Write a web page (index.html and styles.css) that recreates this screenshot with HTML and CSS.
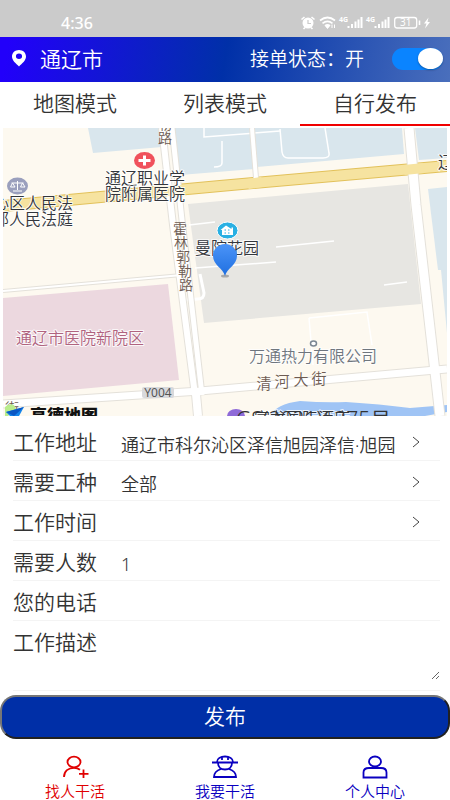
FILE: index.html
```html
<!DOCTYPE html>
<html lang="zh-CN">
<head>
    <meta charset="UTF-8">
    <meta name="viewport" content="width=device-width, initial-scale=1.0">
    <link rel="stylesheet" href="styles.css">
    <title>自行发布</title>
</head>
<body>
    <!-- status bar -->
    <div class="status">
        <span class="time">4:36</span>
        <svg class="status-icons" width="132" height="16" viewBox="300 15 132 16">
            <circle cx="308" cy="23" r="5.5" fill="#fff"/>
            <path d="M301.5 19.500 L304.500 17 M311.500 17 L314.500 19.500 M303.500 29 L305 27.500 M312.500 29 L311 27.500" stroke="#fff" stroke-width="1.600"/>
            <path d="M308 20 V23.500 H311" fill="none" stroke="#cbcbcb" stroke-width="1.200"/>
            <path d="M320 20.500 Q327.500 14.500 335 20.500 M322.500 23.300 Q327.500 19.300 332.500 23.300 M325 26 Q327.500 24 330 26" fill="none" stroke="#fff" stroke-width="1.700"/>
            <path d="M326 26.500 H329 L327.500 28.500 Z M332 24.500 V28 M334.500 24.500 V28" fill="#fff" stroke="#fff"/>
            <text x="339" y="22" class="net">4G</text>
            <path d="M348.500 28 V26 M352 28 V24 M355.500 28 V21.500 M358.500 28 V19.500 M361.500 28 V17" stroke="#fff" stroke-width="2"/>
            <text x="366" y="22" class="net">4G</text>
            <path d="M375.500 28 V26 M379 28 V24 M382.500 28 V21.500 M385.500 28 V19.500 M388.500 28 V17" stroke="#fff" stroke-width="2"/>
            <rect x="394.700" y="17.500" width="22" height="10.500" rx="2.500" fill="none" stroke="#fff" stroke-width="1.300"/>
            <path d="M419.500 20.500 V25" stroke="#fff" stroke-width="1.600"/>
            <text x="405.700" y="26" class="battery">31</text>
            <path d="M428.500 17.500 L424 23.500 H426.500 L425 28.500 L430 22 H427.500 Z" fill="#fff"/>
        </svg>
    </div>

    <!-- city and order switch -->
    <header class="header">
        <svg class="pin" width="14" height="17" viewBox="0 0 14 17">
            <path fill="#fff" fill-rule="evenodd" d="M7 0 C3 0 0 2.800 0 6.500 C0 10.500 4 13.500 7 16.500 C10 13.500 14 10.500 14 6.500 C14 2.800 11 0 7 0 Z M7 3.500 A3 2.700 0 1 1 7 9 A3 2.700 0 1 1 7 3.500 Z"/>
        </svg>
        <span class="city">通辽市</span>
        <label class="order" for="order">接单状态：开</label>
        <input class="switch" type="checkbox" id="order" checked>
    </header>

    <nav class="tabs">
        <a class="tab" href="#">地图模式</a>
        <a class="tab" href="#">列表模式</a>
        <a class="tab active" href="#">自行发布</a>
    </nav>

    <!-- map -->
    <div class="map">
        <svg class="map-view" viewBox="3 128 444 288" preserveAspectRatio="xMidYMid slice">
            <rect x="3" y="128" width="444" height="288" fill="#fdf9f0"/>
            <!-- blocks -->
            <g fill="#d9e6ed">
                <path d="M88 128 H160 L162 147 L93 153 Z"/>
                <path d="M174 128 H250 L254 169 L180 175 Z"/>
                <path d="M254 128 H402 L404 154 L257 167 Z"/>
                <path d="M415 128 H447 V158 L419 160 Z"/>
                <path d="M428 189 L447 187 V270 H438 Z"/>
                <path d="M441 270 H447 V333 Z"/>
            </g>
            <path d="M188 204 L408 184 L421 304 L204 323 Z" fill="#e7e6e2"/>
            <path d="M3 298 L168 284 L179 380 L3 396 Z" fill="#ecd8df"/>
            <!-- river -->
            <path d="M270 416 Q276 404 300 401 Q325 403 346 402 Q380 404 410 408 L447 405 V412 L425 416 Z" fill="#9fc4f5"/>
            <!-- small roads -->
            <g fill="none" stroke="#fff" stroke-width="1.500">
                <path d="M204 128 V137 L280 131 M222 141 V163 Q222 167 214 167"/>
                <path d="M280 129 L282 152 Q283 158 288 158 H323 Q330 158 329 153 L325 128"/>
                <path d="M189 225 L215 222 M195 268 L276 262 M276 247 L334 241 M384 285 L407 282"/>
                <path d="M309 318 L367 312 L372 345 M309 318 L313 365"/>
                <path d="M200 274 L204 293 Q204 299 198 299 L184 300" stroke-width="3"/>
            </g>
            <!-- main avenue -->
            <path d="M3 206 L220 186 L447 166" stroke="#e2c15a" stroke-width="12" fill="none"/>
            <path d="M3 206 L220 186 L447 166" stroke="#f6e3a0" stroke-width="10" fill="none"/>
            <!-- streets -->
            <g fill="none" stroke="#e4e1da">
                <path d="M3 291 L182 275" stroke-width="4"/>
                <path d="M3 404 L200 391 L447 369" stroke-width="9"/>
                <path d="M162 128 L173 225 L195 395" stroke-width="8"/>
                <path d="M172 128 L182 220 L202 395" stroke-width="7"/>
                <path d="M252 128 L256 178" stroke-width="6"/>
                <path d="M409 128 L416 205 L440 416" stroke-width="11"/>
                <path d="M196 394 L198 416" stroke-width="10"/>
            </g>
            <g fill="none" stroke="#fff">
                <path d="M3 291 L182 275" stroke-width="2"/>
                <path d="M3 404 L200 391 L447 369" stroke-width="7"/>
                <path d="M162 128 L173 225 L195 395" stroke-width="6"/>
                <path d="M172 128 L182 220 L202 395" stroke-width="5"/>
                <path d="M252 128 L256 178" stroke-width="4"/>
                <path d="M409 128 L416 205 L440 416" stroke-width="9"/>
                <path d="M196 394 L198 416" stroke-width="8"/>
            </g>
            <path d="M155 192 L182 190" stroke="#f6e3a0" stroke-width="10"/>
            <path d="M248 184 L262 182" stroke="#f6e3a0" stroke-width="10"/>
            <path d="M404 170 L424 168" stroke="#f6e3a0" stroke-width="10"/>
            <!-- road names -->
            <g class="road">
                <text x="165" y="129">勒</text>
                <text x="165" y="143">路</text>
                <text x="180" y="234">霍</text>
                <text x="181" y="248">林</text>
                <text x="183" y="262">郭</text>
                <text x="185" y="276">勒</text>
                <text x="186" y="290">路</text>
                <text x="12" y="413">街</text>
            </g>
            <g class="street">
                <text x="264" y="389">清</text>
                <text x="282" y="387">河</text>
                <text x="301" y="385">大</text>
                <text x="319" y="384">街</text>
            </g>
            <rect x="142" y="387" width="32" height="11" rx="2" fill="#d8d9dc"/>
            <text x="158" y="397" class="code">Y004</text>
            <!-- places -->
            <g class="place">
                <text x="145" y="184">通辽职业学</text>
                <text x="145" y="200">院附属医院</text>
                <text x="33" y="209">心区人民法</text>
                <text x="33" y="225">部人民法庭</text>
                <text x="227" y="254">曼院花园</text>
                <text x="446" y="168">辽</text>
            </g>
            <text x="80" y="344" class="place pink">通辽市医院新院区</text>
            <text x="313" y="362" class="place grey">万通热力有限公司</text>
            <ellipse cx="313.500" cy="343.500" rx="3" ry="2.500" fill="#fff" stroke="#7c8793" stroke-width="1.500"/>
            <ellipse cx="144.500" cy="160.500" rx="10.500" ry="8.500" fill="#f0515b"/>
            <path d="M138.500 160.500 H150.500 M144.500 155.500 V165.500" stroke="#fff" stroke-width="3"/>
            <ellipse cx="17.500" cy="186" rx="10.500" ry="8.500" fill="#9a9fbd"/>
            <path d="M17.500 181 V190 M13 191 H22 M11.500 183 H23.500 M12.500 183 L10.500 187 H15 Z M22.500 183 L20.500 187 H25 Z" fill="none" stroke="#fff"/>
            <ellipse cx="227.500" cy="230.500" rx="10.500" ry="8.500" fill="#29b0e3" stroke="#fff"/>
            <path d="M220.500 230 L226 225.500 L231.500 229 V227.500 H233 V235 H222 V230 Z" fill="#fff"/>
            <path d="M224.500 230 H226 M228 230 H229.500 M224.500 233 H226 M228 233 H229.500" stroke="#29b0e3"/>
            <!-- marker -->
            <defs>
                <linearGradient id="marker" x1="0" y1="0" x2="0" y2="1">
                    <stop offset="0" stop-color="#4b94f8"/>
                    <stop offset="1" stop-color="#1f6fe0"/>
                </linearGradient>
            </defs>
            <ellipse cx="225" cy="276" rx="4" ry="1.500" fill="#a9a9a9"/>
            <path d="M225 276 C223 268 213 265 213 256 C213 249 218 244 225 244 C232 244 237 249 237 256 C237 265 227 268 225 276 Z" fill="url(#marker)"/>
            <!-- map provider -->
            <path d="M5 407 Q9 403 14 405 L16 409 L8 416 H5 Z" fill="#b9ec8c"/>
            <path d="M6 412 L24 407 L19 416 H10 Z" fill="#1585ea"/>
            <path d="M6 412 L24 407 L14 416 Z" fill="#0b57c4"/>
            <text x="30" y="422" class="brand">高德地图</text>
            <ellipse cx="236" cy="416" rx="9" ry="7" fill="#8e6ad8"/>
            <text x="254" y="424" class="place licence-place">富龙国际酒店</text>
            <text x="236" y="427" class="licence">GS(2021)6375号</text>
        </svg>
    </div>

    <!-- form -->
    <form class="form">
        <div class="row">
            <label for="address">工作地址</label>
            <input class="field" type="text" id="address" value="通辽市科尔沁区泽信旭园泽信·旭园">
            <svg class="arrow" width="8" height="12" viewBox="0 0 8 12"><path d="M1 1 L7 6 L1 11"/></svg>
        </div>
        <div class="row">
            <label for="kind">需要工种</label>
            <select class="field" id="kind">
                <option>全部</option>
            </select>
            <svg class="arrow" width="8" height="12" viewBox="0 0 8 12"><path d="M1 1 L7 6 L1 11"/></svg>
        </div>
        <div class="row">
            <label for="date">工作时间</label>
            <input class="field" type="text" id="date">
            <svg class="arrow" width="8" height="12" viewBox="0 0 8 12"><path d="M1 1 L7 6 L1 11"/></svg>
        </div>
        <div class="row">
            <label for="people">需要人数</label>
            <input class="field" type="text" id="people" value="1">
        </div>
        <div class="row">
            <label for="phone">您的电话</label>
            <input class="field" type="tel" id="phone">
        </div>
        <div class="row tall">
            <label for="detail">工作描述</label>
            <textarea class="detail" id="detail"></textarea>
        </div>
        <button class="publish" type="button">发布</button>
    </form>

    <!-- bottom menu -->
    <nav class="menu">
        <a class="item current" href="#">
            <svg width="28" height="24" viewBox="0 0 28 24">
                <ellipse cx="13" cy="7" rx="6.500" ry="5.300"/>
                <path d="M3 22 C3 16 7.500 12.800 13 12.800 C15.500 12.800 17.500 13.500 19 14.800 M22.500 14.500 V23 M18 18.800 H27.500"/>
            </svg>
            找人干活
        </a>
        <a class="item" href="#">
            <svg width="28" height="24" viewBox="0 0 28 24">
                <path d="M1 7.500 H27 M6 7 C6 3.500 9.500 1.500 14 1.500 C18.500 1.500 22 3.500 22 7 M11 2 V5 M17 2 V5 M7 8 C7 12 10 14.500 14 14.500 C18 14.500 21 12 21 8 M10 14 C5.500 15.500 3 18.500 3 22 H25 C25 18.500 22.500 15.500 18 14"/>
            </svg>
            我要干活
        </a>
        <a class="item" href="#">
            <svg width="28" height="24" viewBox="0 0 28 24">
                <ellipse cx="14" cy="6.500" rx="6" ry="5"/>
                <path d="M2.500 22.500 V17.500 C2.500 14.500 5 13 8 13 H20 C23 13 25.500 14.500 25.500 17.500 V22.500 Z"/>
            </svg>
            个人中心
        </a>
    </nav>
</body>
</html>
```
FILE: styles.css
```css
:root {
    --text: #333;
    --blue: #002fa7;
    --link: #0a00c0;
    --red: #e00000;
    --line: #f4f4f4;
}
* {
    box-sizing: border-box;
}
body {
    margin: 0;
    background-color: #fff;
    font-family: "Noto Sans", "Noto Sans CJK SC", sans-serif;
    font-weight: 350;
    color: var(--text);
}
a {
    color: inherit;
    text-decoration: none;
}

/* status bar */
.status {
    display: flex;
    align-items: flex-end;
    justify-content: space-between;
    height: 37px;
    padding: 0 18px 6px 61px;
    background-color: #cbcbcb;
    color: #fff;
}
.time {
    font-size: 16px;
    font-weight: 500;
    line-height: 16px;
}
.net {
    font: bold 7px "Noto Sans", sans-serif;
    fill: #fff;
}
.battery {
    font: 10px "Noto Sans", sans-serif;
    fill: #fff;
    text-anchor: middle;
}

/* header */
.header {
    display: flex;
    align-items: center;
    height: 45px;
    padding: 0 7px 2px 12px;
    background: linear-gradient(100deg, #2200fa 2%, #0030a8 50%, #4a6fbc);
    color: #fff;
}
.city {
    margin-left: 14px;
    font-size: 21px;
    line-height: 30px;
}
.order {
    margin-left: auto;
    margin-right: 28px;
    font-size: 19px;
    line-height: 30px;
}
.switch {
    appearance: none;
    display: flex;
    justify-content: flex-end;
    width: 51px;
    height: 22px;
    margin: 0;
    border-radius: 11px;
    background-color: #0a84ff;
}
.switch::before {
    content: "";
    width: 25px;
    height: 21px;
    border-radius: 50%;
    background-color: #fff;
    box-shadow: 0 1px 2px #0005;
}
.switch:not(:checked) {
    justify-content: flex-start;
    background-color: #ccc;
}

/* tabs */
.tabs {
    display: flex;
    height: 44px;
}
.tab {
    flex: 1;
    border-bottom: 2px solid #fff;
    font-size: 21px;
    line-height: 42px;
    text-align: center;
}
.tab.active {
    border-color: #f00000;
}

/* map */
.map {
    padding: 2px 3px 0;
}
.map-view {
    display: block;
    width: 100%;
    height: 288px;
}
.road {
    font-size: 14px;
    fill: #6d5b52;
    text-anchor: middle;
}
.street {
    font-size: 15px;
    fill: #6d5b52;
    text-anchor: middle;
}
.code {
    font: 12px "Noto Sans", sans-serif;
    fill: #555;
    text-anchor: middle;
}
.place {
    font-size: 16px;
    fill: #33363c;
    text-anchor: middle;
    paint-order: stroke;
    stroke: #fffc;
    stroke-width: 2px;
}
.pink {
    fill: #b0637f;
}
.grey {
    fill: #6f767e;
}
.brand {
    font-size: 17px;
    font-weight: 900;
    fill: #111;
}
.licence {
    font-size: 21px;
    fill: #333;
}
.licence-place {
    text-anchor: start;
}

/* form */
.form {
    padding-top: 5px;
}
.row {
    display: flex;
    align-items: center;
    height: 40px;
    margin: 0 10px 0 13px;
    padding-top: 3px;
    border-bottom: 1px solid var(--line);
}
.row label {
    width: 108px;
    font-size: 21px;
    line-height: 32px;
}
.field {
    appearance: none;
    width: 275px;
    height: 32px;
    margin: 0;
    padding: 4px 0 0;
    border: none;
    outline: none;
    background: none;
    font-family: inherit;
    font-size: 18px;
    font-weight: inherit;
    color: var(--text);
}
.arrow {
    margin-left: 16px;
    fill: none;
    stroke: #444;
}
.tall {
    align-items: flex-start;
    height: 70px;
    padding-top: 5px;
}
.detail {
    flex: 1;
    height: 54px;
    padding: 0;
    border: none;
    outline: none;
    background: none;
    font-family: inherit;
    font-size: 18px;
    color: var(--text);
}
.publish {
    display: block;
    width: 100%;
    height: 44px;
    margin-top: 4px;
    padding: 0 0 2px;
    border: 2px outset #767676;
    border-radius: 16px;
    background-color: var(--blue);
    font-family: inherit;
    font-size: 21px;
    font-weight: inherit;
    line-height: 30px;
    color: #fff;
}

/* bottom menu */
.menu {
    display: flex;
    padding-top: 16px;
}
.item {
    flex: 1;
    display: flex;
    flex-direction: column;
    align-items: center;
    gap: 3px;
    font-size: 15px;
    line-height: 19px;
    color: var(--link);
}
.item svg {
    fill: none;
    stroke: currentColor;
    stroke-width: 1.8;
}
.current {
    color: var(--red);
}
```
